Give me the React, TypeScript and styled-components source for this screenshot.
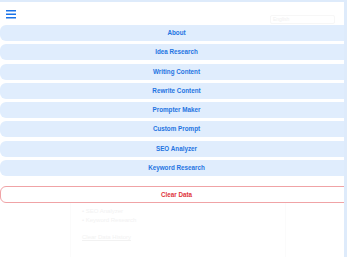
import React from "react";
import styled, { createGlobalStyle } from "styled-components";

const GlobalStyle = createGlobalStyle`
  html, body {
    margin: 0;
    padding: 0;
    background: #deebfb;
    font-family: "Liberation Sans", Arial, sans-serif;
  }
`;

const menuItems = [
  "About",
  "Idea Research",
  "Writing Content",
  "Rewrite Content",
  "Prompter Maker",
  "Custom Prompt",
  "SEO Analyzer",
  "Keyword Research",
];

export default function App() {
  return (
    <>
      <GlobalStyle />
      <Page>
        <Header>
          <Burger aria-label="menu">
            <svg width="10" height="9" viewBox="0 0 10 9">
              <rect x="0" y="0" width="10" height="1.5" fill="#1a73e8" />
              <rect x="0" y="3.5" width="10" height="1.5" fill="#1a73e8" />
              <rect x="0" y="7" width="10" height="1.5" fill="#1a73e8" />
            </svg>
          </Burger>
          <LangSelect>English</LangSelect>
        </Header>
        <Menu>
          {menuItems.map((item) => (
            <MenuButton key={item}>{item}</MenuButton>
          ))}
        </Menu>
        <ClearButton>Clear Data</ClearButton>
        <Ghost>
          <GhostItem>• SEO Analyzer</GhostItem>
          <GhostItem>• Keyword Research</GhostItem>
          <GhostLink>Clear Data History</GhostLink>
        </Ghost>
      </Page>
    </>
  );
}

const Page = styled.div`
  width: 344px;
  height: 255px;
  margin-top: 2px;
  background: #ffffff;
  overflow: hidden;
`;

const Header = styled.div`
  height: 22px;
  display: flex;
  align-items: center;
  justify-content: space-between;
  padding: 0 9px 0 6px;
`;

const Burger = styled.div`
  display: flex;
  margin-top: 3px;
`;

const LangSelect = styled.div`
  width: 61px;
  height: 7px;
  margin-top: 13px;
  border: 1px solid #f7f7f7;
  border-radius: 2px;
  font-size: 5px;
  line-height: 7px;
  color: #f1f1f1;
  padding-left: 2px;
  box-sizing: content-box;
`;

const Menu = styled.div`
  display: flex;
  flex-direction: column;
  gap: 3.3px;
  margin-top: 1px;
`;

const MenuButton = styled.div`
  width: 370px;
  height: 16px;
  border-radius: 6px;
  background: #e0edfd;
  color: #1e74e2;
  font-size: 6.3px;
  font-weight: 700;
  line-height: 16px;
  padding-right: 17px;
  box-sizing: border-box;
  text-align: center;
`;

const ClearButton = styled.div`
  width: 370px;
  height: 17px;
  margin-top: 10px;
  border: 1px solid #f0a3a6;
  border-radius: 6px;
  background: #ffffff;
  color: #e0343c;
  font-size: 6.3px;
  font-weight: 700;
  line-height: 15px;
  padding-right: 17px;
  box-sizing: border-box;
  text-align: center;
`;

const Ghost = styled.div`
  margin-left: 70px;
  width: 203px;
  height: 60px;
  border-left: 1px solid #fbfbfb;
  border-right: 1px solid #fbfbfb;
  padding: 5px 0 0 11px;
  display: flex;
  flex-direction: column;
  gap: 2px;
  color: #f2f2f2;
  font-size: 6px;
`;

const GhostItem = styled.div`
  line-height: 7px;
`;

const GhostLink = styled.div`
  margin-top: 8px;
  line-height: 7px;
  text-decoration: underline;
`;
